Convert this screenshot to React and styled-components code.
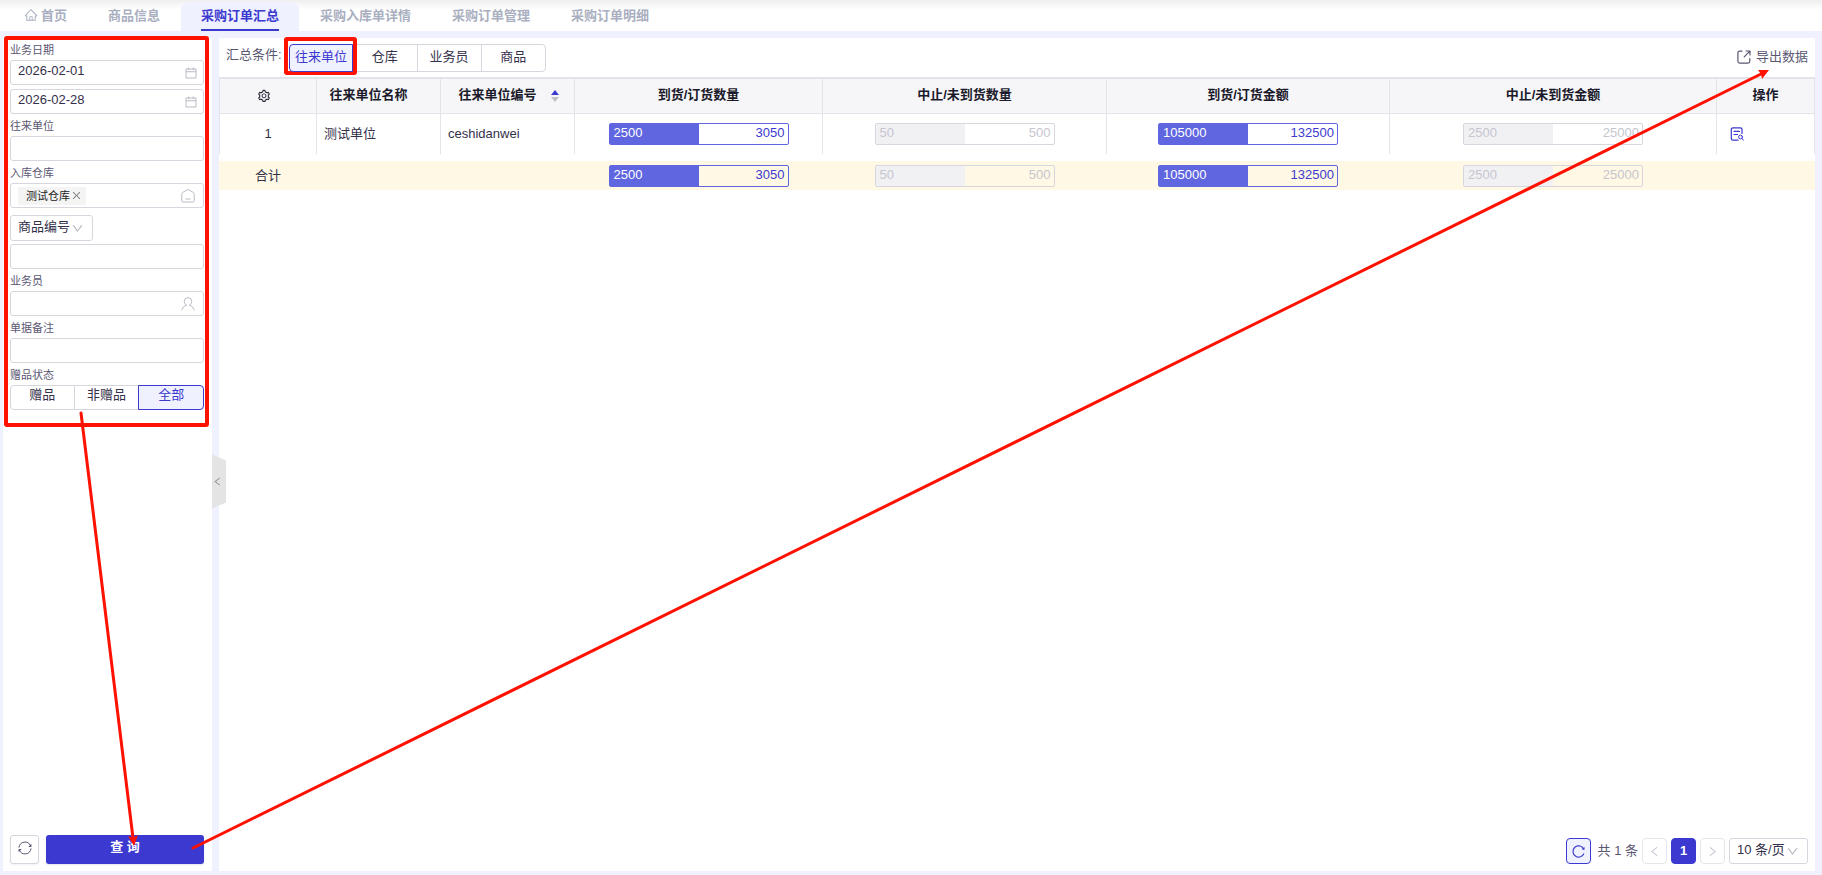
import React, { useState } from 'react'
import styled, { createGlobalStyle } from 'styled-components'
import {
	AiOutlineCalendar,
	AiOutlineClose,
	AiOutlineDown,
	AiOutlineHome,
	AiOutlineLeft,
	AiOutlineReload,
	AiOutlineRight,
	AiOutlineSetting
} from 'react-icons/ai'

const color = {
	primary: '#3b39cf',
	bar: '#6066df',
	tint: '#eff1ff',
	border: '#d7d6df',
	line: '#e3e3ea',
	text: '#33304a',
	label: '#5b5773',
	muted: '#c6c5d0',
	tab: '#a9afc0',
	mark: '#ff1100'
}

const GlobalStyle = createGlobalStyle`
	* {
		box-sizing: border-box;
	}
	body {
		margin: 0;
	}
	body,
	input,
	button,
	select {
		font-family: 'Liberation Sans', 'Noto Sans CJK SC', sans-serif;
		font-size: 13px;
		line-height: 18px;
		color: ${color.text};
	}
	svg {
		display: block;
		flex-shrink: 0;
	}
`

const Page = styled.div`
	position: relative;
	display: flex;
	flex-direction: column;
	min-height: 100vh;
	background: ${color.tint};
`

const TabBar = styled.nav`
	display: flex;
	gap: 1px;
	height: 31px;
	padding: 2px 4px 0;
	background: linear-gradient(#efefef, #fff 10px);
`

const Tab = styled.a`
	display: flex;
	gap: 3px;
	padding: 0 20px;
	border-radius: 8px 8px 0 0;
	background: ${props => (props.$active ? color.tint : 'transparent')};
	color: ${props => (props.$active ? color.primary : color.tab)};
	font-weight: bold;
	text-decoration: none;
	white-space: nowrap;
	svg {
		margin-top: 6px;
	}
	span {
		padding-top: 5px;
		border-bottom: 2px solid
			${props => (props.$active ? color.primary : 'transparent')};
	}
`

const Body = styled.div`
	display: flex;
	flex: 1;
	padding: 7px 7px 4px 3px;
`

const Sidebar = styled.aside`
	display: flex;
	flex-direction: column;
	width: 209px;
	padding: 0 8px 7px 7px;
	background: #fff;
`

const Filters = styled.form`
	display: flex;
	flex: 1;
	flex-direction: column;
`

const FieldLabel = styled.label`
	margin: 3px 0 1px;
	font-size: 11px;
	color: ${color.label};
`

const Field = styled.div`
	display: flex;
	align-items: center;
	height: 25px;
	margin-bottom: ${props => props.$gap || 0}px;
	padding: 0 ${props => (props.$date ? 5 : 8)}px 0 7px;
	border: 1px solid ${color.border};
	border-radius: 3px;
	color: #bbbac4;
	input {
		flex: 1;
		min-width: 0;
		height: 100%;
		padding: 0 0 4px;
		border: 0;
		outline: 0;
		background: none;
	}
`

const Tag = styled.span`
	display: flex;
	align-items: center;
	gap: 1px;
	height: 18px;
	padding: 0 4px 0 8px;
	background: #f4f4f5;
	color: #222;
	font-size: 11px;
	button {
		padding: 0;
		border: 0;
		background: none;
		color: #777;
	}
`

const SelectBox = styled.div`
	display: grid;
	align-items: center;
	width: ${props => props.$width}px;
	height: 26px;
	margin: ${props => props.$margin || 0};
	border: 1px solid ${color.border};
	border-radius: 3px;
	select,
	svg {
		grid-area: 1 / 1;
	}
	select {
		height: 24px;
		padding: 0 0 3px 7px;
		border: 0;
		outline: 0;
		appearance: none;
		background: none;
	}
	svg {
		justify-self: end;
		margin-right: 8px;
		color: #b4b3be;
		pointer-events: none;
	}
`

const Segments = styled.div`
	display: grid;
	grid-auto-flow: column;
	grid-auto-columns: 1fr;
	width: ${props => props.$width || 'auto'};
`

const Segment = styled.label`
	height: ${props => props.$height}px;
	margin-left: -1px;
	padding-top: ${props => props.$top}px;
	border: 1px solid ${color.border};
	text-align: center;
	white-space: nowrap;
	&:first-child {
		margin-left: 0;
		border-radius: 4px 0 0 4px;
	}
	&:last-child {
		border-radius: 0 4px 4px 0;
	}
	&:has(:checked) {
		z-index: 1;
		border-color: ${color.primary};
		background: ${color.tint};
		color: ${color.primary};
	}
	input {
		appearance: none;
		width: 0;
		height: 0;
		margin: 0;
	}
`

const Actions = styled.div`
	display: flex;
	gap: 7px;
`

const ResetButton = styled.button`
	display: grid;
	place-items: center;
	width: 29px;
	height: 29px;
	padding: 0 0 3px;
	border: 1px solid ${color.border};
	border-radius: 3px;
	background: #fff;
	color: ${color.label};
	box-shadow: 0 1px 2px #0000000d;
`

const QueryButton = styled.button`
	flex: 1;
	height: 29px;
	padding: 0 0 5px;
	border: 0;
	border-radius: 3px;
	background: ${color.primary};
	color: #fff;
	font-weight: bold;
	box-shadow: 0 1px 2px #0000001a;
`

const Gutter = styled.div`
	position: relative;
	width: 7px;
`

const CollapseButton = styled.button`
	position: absolute;
	top: 50%;
	left: 0;
	display: grid;
	align-items: center;
	width: 14px;
	height: 54px;
	padding: 0;
	border: 0;
	background: #e4e4e4;
	color: #888;
	clip-path: polygon(0 0, 100% 6px, 100% 48px, 0 100%);
`

const Main = styled.main`
	display: flex;
	flex: 1;
	flex-direction: column;
	min-width: 0;
	background: #fff;
`

const Toolbar = styled.div`
	display: flex;
	align-items: flex-start;
	height: 39px;
	padding: 6px 7px 0;
`

const ToolbarLabel = styled.span`
	width: 63px;
	padding-top: 2px;
	color: ${color.label};
`

const ExportButton = styled.button`
	display: flex;
	align-items: center;
	gap: 5px;
	margin-left: auto;
	padding: 4px 0;
	border: 0;
	background: none;
	color: ${color.label};
`

const Table = styled.table`
	width: 100%;
	table-layout: fixed;
	border-collapse: separate;
	border-spacing: 0;
	border-top: 2px solid ${color.line};
	border-left: 1px solid ${color.line};
	th,
	td {
		border-right: 1px solid ${color.line};
	}
`

const SumTable = styled(Table)`
	margin-top: 7px;
	border-top: 0;
	border-left-color: #fff8e4;
	background: #fff8e4;
	td {
		border-right-color: transparent;
	}
`

const Th = styled.th`
	height: 35px;
	padding: 0 ${props => props.$inset || 0}px 3px 0;
	border-bottom: 1px solid ${color.line};
	background: #f6f6f9;
	color: #1b1a2b;
	svg {
		margin: 2px auto 0;
	}
`

const HeadSort = styled.div`
	display: grid;
	grid-template-columns: 1fr 28px;
	align-items: center;
	padding-left: 8px;
	svg {
		margin: 3px 0 0 5px;
	}
`

const Td = styled.td`
	height: ${props => props.$height || 40}px;
	padding: 0 7px;
	text-align: ${props => props.$align || 'left'};
`

const Bar = styled.div`
	display: flex;
	width: 180px;
	height: 22px;
	margin: 0 auto;
	border: 1px solid ${props => (props.$muted ? color.border : color.bar)};
	border-radius: 2px;
	color: ${props => (props.$muted ? color.muted : color.primary)};
	line-height: 17px;
	text-align: right;
`

const BarFill = styled.div`
	padding-left: 4px;
	background: ${props => (props.$muted ? '#f1f1f4' : color.bar)};
	color: ${props => (props.$muted ? color.muted : '#fff')};
	text-align: left;
`

const BarRest = styled.div`
	flex: 1;
	padding-right: 3px;
`

const IconButton = styled.button`
	display: block;
	padding: 0;
	margin-left: 6px;
	border: 0;
	background: none;
	color: ${color.primary};
`

const Pagination = styled.div`
	display: flex;
	align-items: center;
	justify-content: flex-end;
	gap: 4px;
	margin-top: auto;
	padding: 0 7px 7px;
	color: ${color.label};
`

const Total = styled.span`
	margin-left: 3px;
`

const PageButton = styled.button`
	display: grid;
	place-items: center;
	width: 25px;
	height: 26px;
	padding: 0;
	border: 1px solid ${props => (props.$tone ? color.primary : '#e6e5ec')};
	border-radius: 4px;
	background: ${props =>
		({ solid: color.primary, tint: color.tint }[props.$tone] || '#fff')};
	color: ${props =>
		({ solid: '#fff', tint: color.primary }[props.$tone] || color.muted)};
	font-weight: bold;
`

const Marks = styled.svg`
	position: absolute;
	inset: 0;
	width: 100%;
	height: 100%;
	pointer-events: none;
`

const Icon = ({ size = 14, children }) => (
	<svg
		width={size}
		height={size}
		viewBox='0 0 14 14'
		fill='none'
		stroke='currentColor'
		strokeLinecap='round'
		strokeLinejoin='round'
	>
		{children}
	</svg>
)

const WarehouseIcon = () => (
	<Icon>
		<path d='M.8 5.200 Q.8 4 1.600 3.500 L6 .9 Q7 .4 8 .9 L12.400 3.500 Q13.200 4 13.200 5.200 V11.500 Q13.200 13 11.700 13 H2.300 Q.8 13 .8 11.500 Z M4.800 10 H9.200' />
	</Icon>
)

const PersonIcon = () => (
	<Icon>
		<path d='M5.300 8 Q3.200 6.900 3.200 4.500 A3.800 3.900 0 0 1 10.800 4.500 Q10.800 6.900 8.700 8 M5.300 8 Q1.800 9.200 .7 13 M8.700 8 Q12.200 9.200 13.300 13' />
	</Icon>
)

const SyncIcon = () => (
	<Icon>
		<path d='M1 6.200 A6.100 6.100 0 0 1 12.500 4.500 M13 7.800 A6.100 6.100 0 0 1 1.500 9.500' />
		<path
			d='M13.400 2.800 V6 H10.300 Z M.6 11.200 V8 H3.700 Z'
			fill='currentColor'
			stroke='none'
		/>
	</Icon>
)

const ExportIcon = () => (
	<Icon>
		<path
			d='M5 1.200 H2.700 Q.9 1.200 .9 3 V11.300 Q.9 13.100 2.700 13.100 H11 Q12.800 13.100 12.800 11.300 V8.500 M9 1 H13 V5 M12.800 1.200 L7.200 6.800'
			strokeWidth='1.200'
		/>
	</Icon>
)

const DetailIcon = () => (
	<Icon>
		<path
			d='M12 6.500 V2.500 Q12 .8 10.300 .8 H3 Q1.300 .8 1.300 2.500 V11.500 Q1.300 13.200 3 13.200 H8 M4 4.300 H9.500 M4 7.500 H7.500'
			strokeWidth='1.200'
		/>
		<circle cx='10.500' cy='10' r='1.900' />
		<path d='M12 11.500 L13.400 13.200' />
	</Icon>
)

const SortIcon = () => (
	<svg width='8' height='12' viewBox='0 0 8 12'>
		<path d='M4 0 L8 5 H0 Z' fill={color.primary} />
		<path d='M0 7 H8 L4 12 Z' fill='#bfbfc6' />
	</svg>
)

const columns = [97, 124, 134, 248, 284, 283, 327, 98]

const tabs = [
	'首页',
	'商品信息',
	'采购订单汇总',
	'采购入库单详情',
	'采购订单管理',
	'采购订单明细'
]

const amounts = [
	{ done: 2500, total: 3050 },
	{ done: 50, total: 500, muted: true },
	{ done: 105000, total: 132500 },
	{ done: 2500, total: 25000, muted: true }
]

const Columns = () => (
	<colgroup>
		{columns.map((width, i) => (
			<col key={i} width={width} />
		))}
	</colgroup>
)

const AmountCells = ({ height }) =>
	amounts.map((item, i) => (
		<Td key={i} $height={height}>
			<Bar $muted={item.muted}>
				<BarFill $muted={item.muted} style={{ width: '50%' }}>
					{item.done}
				</BarFill>
				<BarRest>{item.total}</BarRest>
			</Bar>
		</Td>
	))

const RadioGroup = ({ name, options, initial, width, height, top, label }) => {
	const [value, setValue] = useState(initial)
	return (
		<Segments role='radiogroup' aria-label={label} $width={width}>
			{options.map(option => (
				<Segment key={option} $height={height} $top={top}>
					<input
						type='radio'
						name={name}
						checked={value === option}
						onChange={() => setValue(option)}
					/>
					{option}
				</Segment>
			))}
		</Segments>
	)
}

const FilterPanel = () => (
	<Sidebar>
		<Filters>
			<FieldLabel htmlFor='start'>业务日期</FieldLabel>
			<Field $gap={4} $date>
				<input id='start' defaultValue='2026-02-01' />
				<AiOutlineCalendar size={14} />
			</Field>
			<Field $date>
				<input aria-label='结束日期' defaultValue='2026-02-28' />
				<AiOutlineCalendar size={14} />
			</Field>
			<FieldLabel htmlFor='unit'>往来单位</FieldLabel>
			<Field>
				<input id='unit' />
			</Field>
			<FieldLabel htmlFor='warehouse'>入库仓库</FieldLabel>
			<Field>
				<Tag>
					测试仓库
					<button type='button' aria-label='移除'>
						<AiOutlineClose size={11} />
					</button>
				</Tag>
				<input id='warehouse' />
				<WarehouseIcon />
			</Field>
			<SelectBox $width={83} $margin='7px 0 3px'>
				<select aria-label='商品条件'>
					<option>商品编号</option>
				</select>
				<AiOutlineDown size={13} />
			</SelectBox>
			<Field>
				<input aria-label='商品编号' />
			</Field>
			<FieldLabel htmlFor='clerk'>业务员</FieldLabel>
			<Field>
				<input id='clerk' />
				<PersonIcon />
			</Field>
			<FieldLabel htmlFor='remark'>单据备注</FieldLabel>
			<Field>
				<input id='remark' />
			</Field>
			<FieldLabel as='span'>赠品状态</FieldLabel>
			<RadioGroup
				name='gift'
				label='赠品状态'
				options={['赠品', '非赠品', '全部']}
				initial='全部'
				height={25}
				top={0}
			/>
		</Filters>
		<Actions>
			<ResetButton aria-label='重置'>
				<SyncIcon />
			</ResetButton>
			<QueryButton>查 询</QueryButton>
		</Actions>
	</Sidebar>
)

const SummaryTable = () => (
	<div>
		<Table>
			<Columns />
			<thead>
				<tr>
					<Th $inset={8}>
						<AiOutlineSetting size={14} />
					</Th>
					<Th $inset={20}>往来单位名称</Th>
					<Th>
						<HeadSort>
							往来单位编号
							<SortIcon />
						</HeadSort>
					</Th>
					<Th>到货/订货数量</Th>
					<Th>中止/未到货数量</Th>
					<Th>到货/订货金额</Th>
					<Th>中止/未到货金额</Th>
					<Th>操作</Th>
				</tr>
			</thead>
			<tbody>
				<tr>
					<Td $align='center'>1</Td>
					<Td>测试单位</Td>
					<Td>ceshidanwei</Td>
					<AmountCells />
					<Td>
						<IconButton aria-label='查看明细'>
							<DetailIcon />
						</IconButton>
					</Td>
				</tr>
			</tbody>
		</Table>
		<SumTable>
			<Columns />
			<tbody>
				<tr>
					<Td $align='center' $height={29}>
						合计
					</Td>
					<Td $height={29} />
					<Td $height={29} />
					<AmountCells height={29} />
					<Td $height={29} />
				</tr>
			</tbody>
		</SumTable>
	</div>
)

const Pager = () => (
	<Pagination>
		<PageButton $tone='tint' aria-label='刷新'>
			<AiOutlineReload size={15} />
		</PageButton>
		<Total>共 1 条</Total>
		<PageButton aria-label='上一页'>
			<AiOutlineLeft size={13} />
		</PageButton>
		<PageButton $tone='solid'>1</PageButton>
		<PageButton aria-label='下一页'>
			<AiOutlineRight size={13} />
		</PageButton>
		<SelectBox $width={79}>
			<select aria-label='每页条数'>
				<option>10 条/页</option>
			</select>
			<AiOutlineDown size={13} />
		</SelectBox>
	</Pagination>
)

// walkthrough marks: fill in the filters, run the query, then export
const Walkthrough = () => (
	<Marks fill='none' stroke={color.mark} aria-hidden='true'>
		<rect x='6' y='38' width='201' height='387' rx='1' strokeWidth='4' />
		<rect x='286' y='39' width='69' height='34' rx='1' strokeWidth='4' />
		<path
			d='M81 413 L133 838 M193 848 L1761 74'
			strokeWidth='3'
			strokeLinecap='round'
		/>
		<path
			d='M134 846 L128 836 L133 838 L138 835 Z M1769 70 L1758 70 L1761 74 L1762 79 Z'
			fill={color.mark}
			stroke='none'
		/>
	</Marks>
)

const App = () => (
	<Page>
		<GlobalStyle />
		<TabBar>
			{tabs.map((name, i) => (
				<Tab key={name} href='#' $active={i === 2}>
					{i === 0 && <AiOutlineHome size={14} />}
					<span>{name}</span>
				</Tab>
			))}
		</TabBar>
		<Body>
			<FilterPanel />
			<Gutter>
				<CollapseButton aria-label='收起'>
					<AiOutlineLeft size={11} />
				</CollapseButton>
			</Gutter>
			<Main>
				<Toolbar>
					<ToolbarLabel>汇总条件:</ToolbarLabel>
					<RadioGroup
						name='group'
						label='汇总条件'
						options={['往来单位', '仓库', '业务员', '商品']}
						initial='往来单位'
						width='257px'
						height={28}
						top={3}
					/>
					<ExportButton>
						<ExportIcon />
						导出数据
					</ExportButton>
				</Toolbar>
				<SummaryTable />
				<Pager />
			</Main>
		</Body>
		<Walkthrough />
	</Page>
)

export default App
